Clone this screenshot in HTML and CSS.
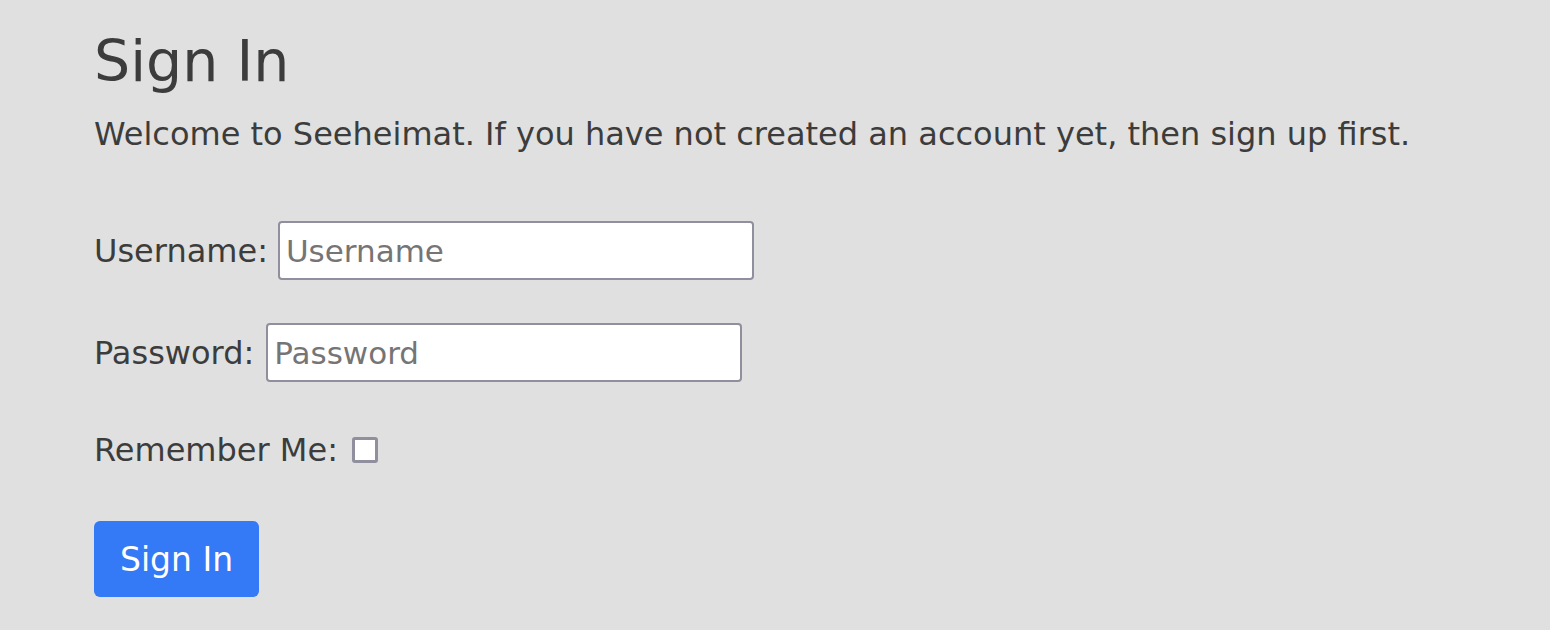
FILE: index.html
```html
<!DOCTYPE html>
<html lang="en">
<head>
<meta charset="utf-8">
<title>Sign In</title>
<link rel="stylesheet" href="styles.css">
</head>
<body>
<main class="page">
  <h1 class="title">Sign In</h1>
  <p class="intro">Welcome to Seeheimat. If you have not created an account yet, then sign up first.</p>
  <form class="form">
    <div class="row row-user">
      <label class="label" for="username">Username:</label>
      <input class="field" id="username" type="text" placeholder="Username">
    </div>
    <div class="row row-pass">
      <label class="label" for="password">Password:</label>
      <input class="field" id="password" type="password" placeholder="Password">
    </div>
    <div class="row row-remember">
      <label class="label" for="remember">Remember Me:</label>
      <input class="check" id="remember" type="checkbox">
    </div>
    <button class="btn" type="button">Sign In</button>
  </form>
</main>
</body>
</html>
```
FILE: styles.css
```css
html, body {
  margin: 0;
  padding: 0;
  background: #e0e0e0;
}
body {
  font-family: "DejaVu Sans", sans-serif;
  color: #3c3c3c;
}
.page {
  padding: 28px 0 0 94px;
}
.title {
  margin: 0;
  font-size: 57px;
  font-weight: normal;
  line-height: 67px;
}
.intro {
  margin: 22px 0 0;
  font-size: 32px;
  line-height: 34px;
}
.form {
  display: flex;
  flex-direction: column;
  align-items: flex-start;
}
.row {
  display: flex;
  align-items: center;
  gap: 10px;
}
.row-user { margin-top: 70px; }
.row-pass { margin-top: 43px; gap: 12px; }
.row-remember { margin-top: 51px; height: 34px; gap: 14px; }
.label {
  font-size: 32px;
  line-height: 34px;
}
.field {
  box-sizing: border-box;
  width: 476px;
  height: 59px;
  margin: 0;
  padding: 0 6px;
  border: 2px solid #8f8f9d;
  border-radius: 4px;
  background: #fff;
  font-family: "DejaVu Sans", sans-serif;
  font-size: 31px;
  color: #3c3c3c;
  outline: none;
}
.field::placeholder {
  color: #757575;
}
.check {
  appearance: none;
  box-sizing: border-box;
  flex: none;
  width: 26px;
  height: 26px;
  margin: 0;
  border: 3px solid #8f8f9d;
  border-radius: 3px;
  background: #fff;
}
.btn {
  margin-top: 54px;
  box-sizing: border-box;
  width: 165px;
  height: 76px;
  padding: 0;
  border: none;
  border-radius: 6px;
  background: #3479f6;
  color: #fff;
  font-family: "DejaVu Sans", sans-serif;
  font-size: 33px;
}
```
